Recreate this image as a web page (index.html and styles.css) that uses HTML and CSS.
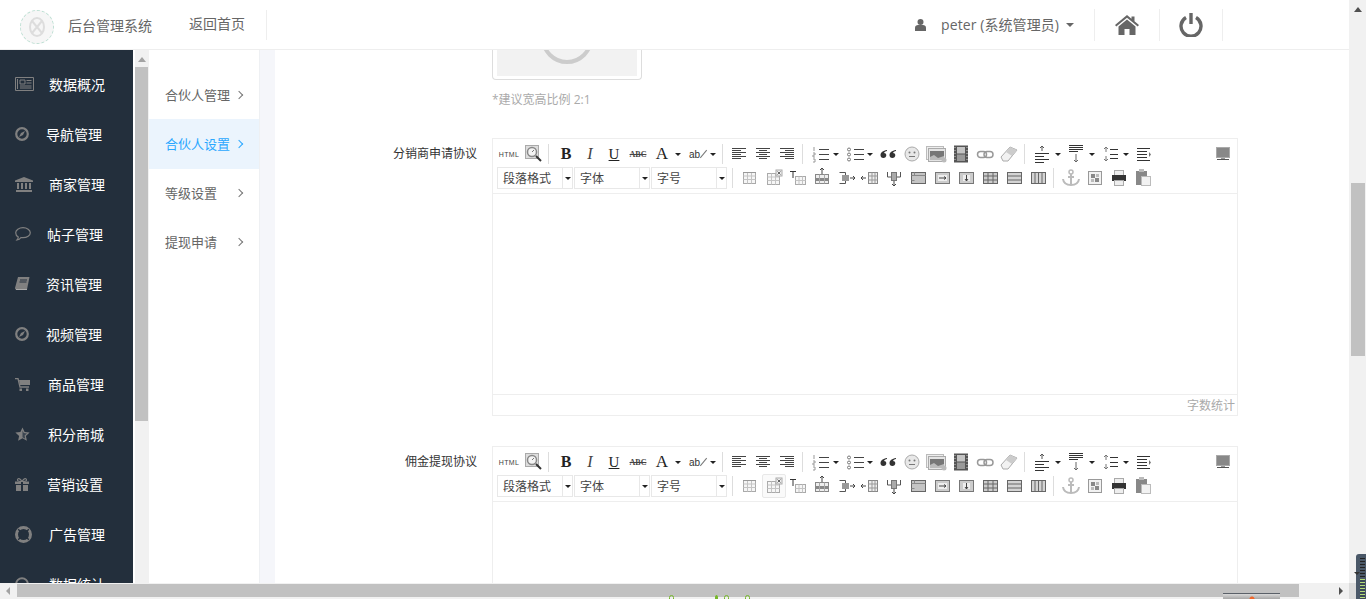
FILE: index.html
```html
<!DOCTYPE html>
<html lang="zh-CN">
<head>
<meta charset="utf-8">
<title>后台管理系统</title>
<link rel="stylesheet" href="styles.css">
</head>
<body>
<svg class="defs" width="0" height="0">
  <symbol id="i-search" viewBox="0 0 24 24"><rect x="4.500" y="3.500" width="13" height="13" fill="#ddd" stroke="#aaa"/><circle cx="11" cy="10" r="4.500" fill="#f4f4f4" stroke="#888" stroke-width="1.500"/><path d="M11 10l2-2" stroke="#777"/><path d="M15 14l5 5" stroke="#333" stroke-width="2"/></symbol>
  <symbol id="i-left" viewBox="0 0 24 24"><path d="M5 6.500h14M5 8.500h9M5 10.500h14M5 12.500h9M5 14.500h14M5 16.500h9" stroke="#444" fill="none"/></symbol>
  <symbol id="i-center" viewBox="0 0 24 24"><path d="M5 6.500h14M8 8.500h8M5 10.500h14M8 12.500h8M5 14.500h14M8 16.500h8" stroke="#444" fill="none"/></symbol>
  <symbol id="i-right" viewBox="0 0 24 24"><path d="M5 6.500h14M10 8.500h9M5 10.500h14M10 12.500h9M5 14.500h14M10 16.500h9" stroke="#444" fill="none"/></symbol>
  <symbol id="i-ol" viewBox="0 0 24 24"><path d="M11 7.500h10M11 12.500h10M11 17.500h10" stroke="#444" fill="none"/><path d="M6 5v4M5 11h2v2H5v2h2M5 17h2v3H5" stroke="#999" fill="none"/></symbol>
  <symbol id="i-ul" viewBox="0 0 24 24"><path d="M12 7.500h10M12 12.500h10M12 17.500h10" stroke="#444" fill="none"/><circle cx="7" cy="7.500" r="1.500" fill="none" stroke="#777"/><circle cx="7" cy="12.500" r="1.500" fill="none" stroke="#777"/><circle cx="7" cy="17.500" r="1.500" fill="none" stroke="#777"/></symbol>
  <symbol id="i-quote" viewBox="0 0 24 24"><path d="M11 8c-4 .5-6.500 2.500-6.500 5.300 0 1.500 1.100 2.700 2.800 2.700 1.800 0 3-1.200 3-2.800 0-1.400-1-2.300-2.200-2.300.2-.8 1.300-1.500 2.900-1.800zM20 8c-4 .5-6.500 2.500-6.500 5.300 0 1.500 1.100 2.700 2.800 2.700 1.800 0 3-1.200 3-2.800 0-1.400-1-2.300-2.200-2.300.2-.8 1.300-1.500 2.900-1.800z" fill="#333"/></symbol>
  <symbol id="i-smile" viewBox="0 0 24 24"><circle cx="12" cy="12" r="7" fill="#e8e8e8" stroke="#aaa"/><circle cx="9.500" cy="10.500" r="1" fill="#777"/><circle cx="14.500" cy="10.500" r="1" fill="#777"/><path d="M9 14.500h6" stroke="#777"/></symbol>
  <symbol id="i-image" viewBox="0 0 24 24"><rect x="2.500" y="4.500" width="17" height="13" fill="#eee" stroke="#bbb"/><rect x="4.500" y="6.500" width="17" height="13" fill="#e4e4e4" stroke="#aaa"/><rect x="6" y="9" width="14" height="9" fill="#777"/><path d="M6 15l4-2 4 3 6-2v4H6z" fill="#bbb"/><circle cx="20" cy="18" r="2.500" fill="#bbb"/></symbol>
  <symbol id="i-film" viewBox="0 0 24 24"><rect x="5" y="3.500" width="14" height="17" fill="#555"/><path d="M6 5v1M6 8v1M6 11v1M6 14v1M6 17v1M18 5v1M18 8v1M18 11v1M18 14v1M18 17v1" stroke="#ccc"/><rect x="8" y="5" width="8" height="6.500" fill="#c4c4c4"/><rect x="8" y="12.500" width="8" height="6.500" fill="#999"/></symbol>
  <symbol id="i-link" viewBox="0 0 24 24"><rect x="4.500" y="9.500" width="9" height="6" rx="3" fill="none" stroke="#999" stroke-width="1.500"/><rect x="11" y="9.500" width="9" height="6" rx="3" fill="none" stroke="#999" stroke-width="1.500"/></symbol>
  <symbol id="i-eraser" viewBox="0 0 24 24"><path d="M4 15l9-10 7 3-9 11-5 0z" fill="#f2f2f2" stroke="#aaa"/><path d="M13 5l7 3-5 6-6-4z" fill="#ccc"/></symbol>
  <symbol id="i-above" viewBox="0 0 24 24"><path d="M12 9V4M10 6l2-2 2 2" stroke="#555" fill="none"/><path d="M5 11.500h14M5 14.500h9M5 17.500h14M5 20.500h9" stroke="#333" fill="none"/></symbol>
  <symbol id="i-below" viewBox="0 0 24 24"><path d="M5 3.500h14M5 5.500h14M5 7.500h14M5 9.500h9" stroke="#333" fill="none"/><path d="M12 12v8M10 18l2 2 2-2" stroke="#666" fill="none"/></symbol>
  <symbol id="i-line" viewBox="0 0 24 24"><path d="M8 5v5M6 7l2-2 2 2M8 14v5M6 17l2 2 2-2" stroke="#777" fill="none"/><path d="M12 7.500h8M12 12.500h8M12 16.500h8" stroke="#333" fill="none"/></symbol>
  <symbol id="i-indent" viewBox="0 0 24 24"><path d="M5 6.500h13M5 9.500h10M5 12.500h10M5 15.500h10M5 18.500h13" stroke="#333" fill="none"/><path d="M17 10l2 2.500-2 2.500z" fill="#777"/></symbol>
  <symbol id="i-full" viewBox="0 0 24 24"><rect x="5.500" y="5.500" width="13" height="10" fill="#888" stroke="#aaa"/><path d="M6 17.500h12" stroke="#555"/><path d="M10 16.500h4" stroke="#999"/></symbol>
  <symbol id="i-table" viewBox="0 0 24 24"><rect x="5.500" y="6.500" width="12" height="11" fill="#f6f6f6" stroke="#aaa"/><path d="M5.500 10h12M5.500 13.500h12M9.500 6.500v11M13.500 6.500v11" stroke="#c4c4c4"/><path d="M5 6.500h13" stroke="#999"/></symbol>
  <symbol id="i-tdel" viewBox="0 0 24 24"><rect x="5.500" y="7.500" width="12" height="11" fill="#f6f6f6" stroke="#aaa"/><path d="M5.500 11h12M5.500 14.500h12M9.500 7.500v11M13.500 7.500v11" stroke="#c4c4c4"/><rect x="14" y="4" width="6" height="6" fill="#eee" stroke="#aaa"/><path d="M15.500 5.500l3 3M18.500 5.500l-3 3" stroke="#666"/></symbol>
  <symbol id="i-ttitle" viewBox="0 0 24 24"><path d="M4 5.500h6M7 5v7" stroke="#333" fill="none"/><rect x="9.500" y="10.500" width="10" height="8" fill="#f6f6f6" stroke="#aaa"/><path d="M9.500 14.500h10M13 10.500v8M16.500 10.500v8" stroke="#c4c4c4"/></symbol>
  <symbol id="i-rowadd" viewBox="0 0 24 24"><path d="M12 2v6M10 4l2-2 2 2" stroke="#444" fill="none"/><rect x="5.500" y="8.500" width="13" height="9" fill="#eee" stroke="#888"/><rect x="6" y="12" width="12" height="3" fill="#888"/><path d="M9.500 8.500v9M14.500 8.500v9" stroke="#aaa"/></symbol>
  <symbol id="i-coladd" viewBox="0 0 24 24"><path d="M5.500 6.500h6v11h-6" fill="none" stroke="#555"/><rect x="8" y="9" width="7" height="6" fill="#999"/><path d="M16 12h5M19 10l2 2-2 2" stroke="#444" fill="none"/></symbol>
  <symbol id="i-colins" viewBox="0 0 24 24"><rect x="10.500" y="6.500" width="9" height="11" fill="#eee" stroke="#888"/><path d="M14 6.500v11M17 6.500v11M10.500 10h9M10.500 14h9" stroke="#999"/><path d="M3 12h5M5 10l-2 2 2 2" stroke="#444" fill="none"/></symbol>
  <symbol id="i-merge" viewBox="0 0 24 24"><path d="M5.500 6v5h4M18.500 6v5h-4" fill="none" stroke="#555"/><rect x="9.500" y="6.500" width="5" height="8" fill="#aaa" stroke="#777"/><path d="M12 15v5M10 18l2 2 2-2" stroke="#444" fill="none"/></symbol>
  <symbol id="i-cellfull" viewBox="0 0 24 24"><rect x="5.500" y="6.500" width="14" height="11" fill="#c4c4c4" stroke="#666"/><path d="M5.500 9.500h14M5.500 14.500h3M8.500 6.500v3" stroke="#888"/></symbol>
  <symbol id="i-cellright" viewBox="0 0 24 24"><rect x="5.500" y="6.500" width="14" height="11" fill="#ccc" stroke="#777"/><rect x="8" y="9" width="9" height="6" fill="#eee"/><path d="M9 12h7M14 10.500l2 1.500-2 1.500" stroke="#444" fill="none"/></symbol>
  <symbol id="i-celldown" viewBox="0 0 24 24"><rect x="5.500" y="6.500" width="14" height="11" fill="#ccc" stroke="#777"/><rect x="9" y="9" width="7" height="6" fill="#eee"/><path d="M12.500 9v6M11 13l1.500 2 1.500-2" stroke="#444" fill="none"/></symbol>
  <symbol id="i-grid" viewBox="0 0 24 24"><rect x="5.500" y="6.500" width="14" height="11" fill="#ccc" stroke="#666"/><path d="M5.500 10h14M5.500 14h14M10 6.500v11M15 6.500v11" stroke="#666"/></symbol>
  <symbol id="i-rows" viewBox="0 0 24 24"><rect x="5.500" y="6.500" width="14" height="11" fill="#d4d4d4" stroke="#666"/><path d="M5.500 10h14M5.500 14h14" stroke="#666"/></symbol>
  <symbol id="i-cols" viewBox="0 0 24 24"><rect x="5.500" y="6.500" width="14" height="11" fill="#d4d4d4" stroke="#666"/><path d="M9 6.500v11M12.500 6.500v11M16 6.500v11" stroke="#666"/></symbol>
  <symbol id="i-anchor" viewBox="0 0 24 24"><circle cx="12" cy="6" r="2" fill="none" stroke="#bbb" stroke-width="1.500"/><path d="M12 8v11M9 11h6M4 13c.5 4 4 6 8 6s7.500-2 8-6" fill="none" stroke="#bbb" stroke-width="2"/></symbol>
  <symbol id="i-page" viewBox="0 0 24 24"><rect x="5.500" y="5.500" width="13" height="13" fill="#f2f2f2" stroke="#999"/><rect x="8" y="8" width="4" height="4" fill="#888"/><rect x="13" y="8" width="3" height="3" fill="#bbb"/><rect x="8" y="13" width="3" height="3" fill="#bbb"/><rect x="12" y="12" width="4" height="4" fill="#888"/></symbol>
  <symbol id="i-print" viewBox="0 0 24 24"><rect x="7.500" y="4.500" width="9" height="5" fill="#eee" stroke="#aaa"/><rect x="5" y="9" width="14" height="6" fill="#333"/><rect x="7.500" y="14.500" width="9" height="5" fill="#eee" stroke="#aaa"/></symbol>
  <symbol id="i-paste" viewBox="0 0 24 24"><rect x="5" y="5" width="11" height="14" fill="#888"/><rect x="8" y="3" width="5" height="3" fill="#bbb"/><rect x="10.500" y="10.500" width="9" height="9" fill="#f2f2f2" stroke="#bbb"/></symbol>
</svg>

<div class="app">
  <div class="screen">
    <div class="main">
      <header class="top">
        <div class="logo"><svg width="20" height="24" viewBox="0 0 20 24"><ellipse cx="10" cy="12" rx="7" ry="9" fill="none" stroke="#ddd" stroke-width="2"/><path d="M5 6l10 12M15 6L5 18" stroke="#ddd" stroke-width="2"/></svg></div>
        <span class="brand">后台管理系统</span>
        <a class="back">返回首页</a>
        <div class="top-right">
          <div class="user">
            <svg class="user-icon" width="11" height="12" viewBox="0 0 11 12"><circle cx="5.500" cy="3" r="3" fill="#666"/><path d="M0 12V8.500C0 7 1.500 6 3 6h5c1.500 0 3 1 3 2.500V12z" fill="#666"/></svg>
            <span class="user-name">peter (系统管理员)</span>
            <i class="caret"></i>
          </div>
          <div class="top-btn"><svg width="24" height="20" viewBox="0 0 24 20"><path d="M12 0l4.500 3.800V1.500h3v4.800L24 10l-1.300 1.500L12 2.700 1.300 11.500 0 10z" fill="#666"/><path d="M3.500 11.500L12 4.500l8.500 7V20h-6v-6h-5v6h-6z" fill="#666"/></svg></div>
          <div class="top-btn"><svg width="24" height="24" viewBox="0 0 24 24"><path d="M7 4.500a10 10 0 1 0 10 0" fill="none" stroke="#666" stroke-width="3.400"/><path d="M12 0v11" stroke="#666" stroke-width="3.400"/></svg></div>
        </div>
      </header>
      <div class="body">
        <nav class="side">
          <a class="side-item"><svg class="w-news" width="19" height="14" viewBox="0 0 19 14"><path d="M.5.500h18v13H.5z" fill="none" stroke="#808080"/><path d="M2.500 2v10M5 3h5v4H5zM11.500 3.500h5M11.500 6h5M5 9h11.500M5 11h11.500" stroke="#808080" fill="none"/></svg><span>数据概况</span></a>
          <a class="side-item"><svg class="w-compass" width="14" height="14" viewBox="0 0 14 14"><circle cx="7" cy="7" r="5.800" fill="none" stroke="#808080" stroke-width="2.200"/><path d="M10 4L8 8 4 10l2-4z" fill="#808080"/></svg><span>导航管理</span></a>
          <a class="side-item"><svg class="w-bank" width="18" height="15" viewBox="0 0 18 15"><path d="M9 0l9 3.500V5H0V3.500z" fill="#808080"/><path d="M2 6h2v6H2zM6 6h2v6H6zM10 6h2v6h-2zM14 6h2v6h-2zM1 13h16v2H1z" fill="#808080"/></svg><span>商家管理</span></a>
          <a class="side-item"><svg class="w-comment" width="16" height="14" viewBox="0 0 16 14"><path d="M8 .7c4 0 7.300 2.200 7.300 5s-3.300 5-7.300 5c-.7 0-1.300 0-2-.2C5 12 3.500 12.800 2 13c.7-.8 1.200-1.700 1.300-3C1.500 9 .7 7.500.7 5.700c0-2.800 3.300-5 7.300-5z" fill="none" stroke="#808080" stroke-width="1.200"/></svg><span>帖子管理</span></a>
          <a class="side-item"><svg class="w-book" width="15" height="14" viewBox="0 0 15 14"><path d="M3 0h11.500L12 12.500H1.500C.5 12.500 0 12 0 11z" fill="#808080"/><path d="M5 3h7M4.500 5h7" stroke="#232f3c"/><path d="M1 12.500h11" stroke="#aaa"/></svg><span>资讯管理</span></a>
          <a class="side-item"><svg class="w-compass" width="14" height="14" viewBox="0 0 14 14"><circle cx="7" cy="7" r="5.800" fill="none" stroke="#808080" stroke-width="2.200"/><path d="M10 4L8 8 4 10l2-4z" fill="#808080"/></svg><span>视频管理</span></a>
          <a class="side-item"><svg class="w-cart" width="15" height="13" viewBox="0 0 15 13"><path d="M0 .5h3L5 9h9" fill="none" stroke="#808080" stroke-width="1.300"/><path d="M4 2h11v5H5zM4.500 10.500h2.500V13H4.500zM11 10.500h2.500V13H11z" fill="#808080"/></svg><span>商品管理</span></a>
          <a class="side-item"><svg class="w-cart" width="15" height="14" viewBox="0 0 15 14"><path d="M7.500.5l2.100 4.600 5 .5-3.700 3.300 1 4.900-4.400-2.500-4.400 2.500 1-4.900L.4 5.600l5-.5z" fill="#808080"/><path d="M7.500 3.500v6.700l2.700 1.500-.6-3.200 2.400-2.100-3.200-.4z" fill="#3b4550"/></svg><span>积分商城</span></a>
          <a class="side-item"><svg class="w-gift" width="14" height="13" viewBox="0 0 14 13"><path d="M0 3.500h14V6H0zM1 7h12v6H1z" fill="#808080"/><path d="M6 3h2v10H6z" fill="#232f3c"/><path d="M7 3.500C5 0 2.500 0 2.500 2c0 1 2 1.500 4.500 1.500zM7 3.500C9 0 11.500 0 11.500 2c0 1-2 1.500-4.500 1.500z" fill="none" stroke="#808080" stroke-width="1.200"/></svg><span>营销设置</span></a>
          <a class="side-item"><svg class="w-ring" width="17" height="17" viewBox="0 0 17 17"><circle cx="8.500" cy="8.500" r="7" fill="none" stroke="#808080" stroke-width="3"/><path d="M3.200 3.200l3 3M13.800 3.200l-3 3M3.200 13.800l3-3M13.800 13.800l-3-3" stroke="#232f3c" stroke-width="1.300"/></svg><span>广告管理</span></a>
          <a class="side-item"><svg class="w-last" width="14" height="14" viewBox="0 0 14 14"><circle cx="7" cy="7" r="5.800" fill="none" stroke="#808080" stroke-width="2"/></svg><span>数据统计</span></a>
        </nav>
        <div class="side-scroll"><i class="arrow-up"></i><div class="side-thumb"></div></div>
        <div class="subnav">
          <a class="sub-item"><span>合伙人管理</span><i class="chev"></i></a>
          <a class="sub-item active"><span>合伙人设置</span><i class="chev"></i></a>
          <a class="sub-item"><span>等级设置</span><i class="chev"></i></a>
          <a class="sub-item"><span>提现申请</span><i class="chev"></i></a>
        </div>
        <div class="gutter"></div>
        <main class="content">
          <div class="upload-row">
            <div class="upload-box"><svg width="140" height="26" viewBox="0 0 140 26"><circle cx="70" cy="-12" r="24" fill="none" stroke="#ccc" stroke-width="4"/></svg></div>
            <p class="hint">*建议宽高比例 2:1</p>
          </div>

          <div class="form-row">
            <label class="form-label">分销商申请协议</label>
            <div class="editor">
              <div class="toolbar">
                <div class="tb-row">
                  <span class="btn t-html">HTML</span><span class="btn"><svg><use href="#i-search"/></svg></span><i class="sep"></i>
                  <span class="btn t-b">B</span><span class="btn t-i">I</span><span class="btn t-u">U</span><span class="btn t-abc">ABC</span>
                  <span class="btn t-a">A</span><i class="drop wide"></i><span class="btn t-ab">ab</span><i class="drop wide"></i><i class="sep tight"></i>
                  <span class="btn"><svg><use href="#i-left"/></svg></span><span class="btn"><svg><use href="#i-center"/></svg></span><span class="btn"><svg><use href="#i-right"/></svg></span><i class="sep"></i>
                  <span class="btn"><svg><use href="#i-ol"/></svg></span><i class="drop"></i><span class="btn"><svg><use href="#i-ul"/></svg></span><i class="drop"></i>
                  <span class="btn"><svg><use href="#i-quote"/></svg></span><span class="btn"><svg><use href="#i-smile"/></svg></span><span class="btn"><svg><use href="#i-image"/></svg></span><span class="btn shift"><svg><use href="#i-film"/></svg></span><span class="btn"><svg><use href="#i-link"/></svg></span><span class="btn"><svg><use href="#i-eraser"/></svg></span><i class="sep"></i>
                  <span class="btn"><svg><use href="#i-above"/></svg></span><i class="drop"></i><span class="btn"><svg><use href="#i-below"/></svg></span><i class="drop"></i><span class="btn"><svg><use href="#i-line"/></svg></span><i class="drop"></i><span class="btn"><svg><use href="#i-indent"/></svg></span>
                  <span class="btn push"><svg><use href="#i-full"/></svg></span>
                </div>
                <div class="tb-row">
                  <div class="combo"><span class="combo-label">段落格式</span><i class="combo-arrow"></i></div>
                  <div class="combo"><span class="combo-label">字体</span><i class="combo-arrow"></i></div>
                  <div class="combo"><span class="combo-label">字号</span><i class="combo-arrow"></i></div>
                  <i class="sep after-combo"></i>
                  <span class="btn"><svg><use href="#i-table"/></svg></span><span class="btn"><svg><use href="#i-tdel"/></svg></span><span class="btn"><svg><use href="#i-ttitle"/></svg></span><span class="btn"><svg><use href="#i-rowadd"/></svg></span><span class="btn"><svg><use href="#i-coladd"/></svg></span><span class="btn"><svg><use href="#i-colins"/></svg></span><span class="btn"><svg><use href="#i-merge"/></svg></span><span class="btn"><svg><use href="#i-cellfull"/></svg></span><span class="btn"><svg><use href="#i-cellright"/></svg></span><span class="btn"><svg><use href="#i-celldown"/></svg></span><span class="btn"><svg><use href="#i-grid"/></svg></span><span class="btn"><svg><use href="#i-rows"/></svg></span><span class="btn"><svg><use href="#i-cols"/></svg></span><i class="sep"></i>
                  <span class="btn"><svg><use href="#i-anchor"/></svg></span><span class="btn"><svg><use href="#i-page"/></svg></span><span class="btn"><svg><use href="#i-print"/></svg></span><span class="btn"><svg><use href="#i-paste"/></svg></span>
                </div>
              </div>
              <div class="ed-body"></div>
              <div class="ed-foot">字数统计</div>
            </div>
          </div>

          <div class="form-row">
            <label class="form-label">佣金提现协议</label>
            <div class="editor">
              <div class="toolbar">
                <div class="tb-row">
                  <span class="btn t-html">HTML</span><span class="btn"><svg><use href="#i-search"/></svg></span><i class="sep"></i>
                  <span class="btn t-b">B</span><span class="btn t-i">I</span><span class="btn t-u">U</span><span class="btn t-abc">ABC</span>
                  <span class="btn t-a">A</span><i class="drop wide"></i><span class="btn t-ab">ab</span><i class="drop wide"></i><i class="sep tight"></i>
                  <span class="btn"><svg><use href="#i-left"/></svg></span><span class="btn"><svg><use href="#i-center"/></svg></span><span class="btn"><svg><use href="#i-right"/></svg></span><i class="sep"></i>
                  <span class="btn"><svg><use href="#i-ol"/></svg></span><i class="drop"></i><span class="btn"><svg><use href="#i-ul"/></svg></span><i class="drop"></i>
                  <span class="btn"><svg><use href="#i-quote"/></svg></span><span class="btn"><svg><use href="#i-smile"/></svg></span><span class="btn"><svg><use href="#i-image"/></svg></span><span class="btn shift"><svg><use href="#i-film"/></svg></span><span class="btn"><svg><use href="#i-link"/></svg></span><span class="btn"><svg><use href="#i-eraser"/></svg></span><i class="sep"></i>
                  <span class="btn"><svg><use href="#i-above"/></svg></span><i class="drop"></i><span class="btn"><svg><use href="#i-below"/></svg></span><i class="drop"></i><span class="btn"><svg><use href="#i-line"/></svg></span><i class="drop"></i><span class="btn"><svg><use href="#i-indent"/></svg></span>
                  <span class="btn push"><svg><use href="#i-full"/></svg></span>
                </div>
                <div class="tb-row">
                  <div class="combo"><span class="combo-label">段落格式</span><i class="combo-arrow"></i></div>
                  <div class="combo"><span class="combo-label">字体</span><i class="combo-arrow"></i></div>
                  <div class="combo"><span class="combo-label">字号</span><i class="combo-arrow"></i></div>
                  <i class="sep after-combo"></i>
                  <span class="btn"><svg><use href="#i-table"/></svg></span><span class="btn hovered"><svg><use href="#i-tdel"/></svg></span><span class="btn"><svg><use href="#i-ttitle"/></svg></span><span class="btn"><svg><use href="#i-rowadd"/></svg></span><span class="btn"><svg><use href="#i-coladd"/></svg></span><span class="btn"><svg><use href="#i-colins"/></svg></span><span class="btn"><svg><use href="#i-merge"/></svg></span><span class="btn"><svg><use href="#i-cellfull"/></svg></span><span class="btn"><svg><use href="#i-cellright"/></svg></span><span class="btn"><svg><use href="#i-celldown"/></svg></span><span class="btn"><svg><use href="#i-grid"/></svg></span><span class="btn"><svg><use href="#i-rows"/></svg></span><span class="btn"><svg><use href="#i-cols"/></svg></span><i class="sep"></i>
                  <span class="btn"><svg><use href="#i-anchor"/></svg></span><span class="btn"><svg><use href="#i-page"/></svg></span><span class="btn"><svg><use href="#i-print"/></svg></span><span class="btn"><svg><use href="#i-paste"/></svg></span>
                </div>
              </div>
              <div class="ed-body"></div>
            </div>
          </div>
        </main>
      </div>
    </div>
    <div class="page-scroll"><i class="arrow-up"></i><div class="page-thumb"></div></div>
  </div>
  <div class="hscroll">
    <i class="arrow-left"></i>
    <div class="h-thumb"></div>
    <i class="arrow-right"></i>
    <div class="corner"></div>
  </div>
  <div class="overlay-plant"><i></i><i class="mid"></i><i></i><i></i></div>
  <div class="overlay-box"></div>
  <div class="overlay-meter"></div>
</div>
</body>
</html>
```
FILE: styles.css
```css
* { box-sizing: border-box; }
html, body { margin: 0; padding: 0; height: 599px; overflow: hidden; background: #fff; }
body { font-family: "Open Sans", "Noto Sans CJK SC", sans-serif; font-size: 12px; color: #666; }
.defs { position: absolute; }
a { color: inherit; text-decoration: none; }
i { font-style: normal; display: block; }

.app { position: relative; width: 1366px; height: 599px; display: flex; flex-direction: column; overflow: hidden; }
.screen { display: flex; height: 583px; flex: none; }
.main { flex: 1; min-width: 0; display: flex; flex-direction: column; }

/* Top bar */
.top { height: 50px; flex: none; display: flex; align-items: center; padding-left: 20px; border-bottom: 1px solid #eeeeee; background: #fff; }
.logo { width: 34px; height: 34px; margin-top: 4px; border: 1px dashed #bfe0d4; border-radius: 50%; background: #f6f6f6; display: flex; align-items: center; justify-content: center; }
.brand { margin-left: 14px; font-size: 14px; line-height: 20px; color: #666; padding-top: 2px; }
.back { margin-left: 37px; font-size: 14px; line-height: 20px; color: #666; height: 30px; padding: 4px 21px 0 0; border-right: 1px solid #eee; }
.top-right { margin-left: auto; display: flex; align-items: center; height: 32px; padding-right: 126px; }
.user { display: flex; align-items: center; height: 32px; padding-right: 20px; border-right: 1px solid #eee; }
.user-icon { margin-right: 15px; }
.user-name { font-size: 14px; color: #666; line-height: 20px; white-space: nowrap; letter-spacing: .08px; }
.caret { margin-left: 7px; width: 0; height: 0; border-left: 4px solid transparent; border-right: 4px solid transparent; border-top: 4px solid #666; }
.top-btn { width: 65px; height: 32px; display: flex; align-items: center; justify-content: center; border-right: 1px solid #eee; }
.top-btn:last-child { width: 63px; }

/* Body row */
.body { flex: 1; min-height: 0; display: flex; overflow: hidden; }
.side { width: 133px; flex: none; background: #232f3c; padding-top: 9px; overflow: hidden; }
.side-item { display: flex; align-items: center; height: 50px; padding-left: 15px; color: #fff; font-size: 14px; white-space: nowrap; }
.w-news { margin-right: 15px; }
.w-compass { margin-right: 17px; }
.w-bank { margin-right: 16px; }
.w-comment { margin-right: 16px; }
.w-book { margin-right: 16px; }
.w-cart { margin-right: 18px; }
.w-gift { margin-right: 18px; }
.w-ring { margin-right: 17px; }
.w-last { margin-right: 20px; }
.side-scroll { width: 16px; flex: none; background: #f1f1f1; border-left: 2px solid #fff; padding-top: 7px; }
.side-thumb { margin: 5px 1px 0 0; height: 354px; background: #c1c1c1; }
.arrow-up { width: 0; height: 0; margin: 0 auto; border-left: 4px solid transparent; border-right: 4px solid transparent; border-bottom: 5px solid #a3a3a3; }
.subnav { width: 111px; flex: none; padding-top: 20px; background: #fff; border-right: 1px solid #eef0f3; }
.sub-item { display: flex; align-items: center; justify-content: space-between; height: 49px; padding: 0 15px 0 16px; font-size: 13px; color: #666; }
.sub-item.active { height: 50px; margin-bottom: -1px; padding-bottom: 1px; background: #ebf4fd; color: #2aa7ff; }
.chev { width: 6px; height: 6px; margin-right: 2px; border-top: 1px solid #777; border-right: 1px solid #777; transform: rotate(45deg); }
.active .chev { border-color: #2aa7ff; }
.gutter { width: 15px; flex: none; background: #f5f6fa; }
.content { flex: 1; min-width: 0; overflow: hidden; background: #fff; }

/* Upload */
.upload-row { margin-left: 217px; }
.upload-box { width: 150px; height: 30px; border: 1px solid #ddd; border-top: 0; border-radius: 0 0 4px 4px; padding: 0 4px 3px; }
.upload-box svg { display: block; background: #f2f2f2; }
.hint { margin: 10px 0 0; font-size: 12px; line-height: 20px; color: #aaa; }

/* Form rows */
.form-row { display: flex; margin-top: 28px; }
.form-row + .form-row { margin-top: 30px; }
.form-label { width: 217px; flex: none; padding: 6px 15px 0 0; text-align: right; font-size: 12px; line-height: 20px; color: #333; }
.editor { width: 746px; flex: none; height: 278px; border: 1px solid #eeeeee; background: #fff; display: flex; flex-direction: column; }
.toolbar { height: 55px; flex: none; padding: 3px 2px 0 4px; border-bottom: 1px solid #eeeeee; }
.tb-row { display: flex; align-items: center; height: 24px; }
.btn { width: 24px; height: 24px; flex: none; display: flex; align-items: center; justify-content: center; color: #222; font-family: "Liberation Serif", serif; position: relative; }
.btn svg { width: 24px; height: 24px; display: block; }
.shift { margin-left: 1px; }
.push { margin-left: auto; }
.hovered { border: 1px solid #e8e8e8; border-radius: 2px; background: #fafafa; }
.hovered svg { flex: none; }
.t-html { font-family: "Liberation Sans", sans-serif; font-size: 7px; color: #444; letter-spacing: .3px; }
.t-b { font-size: 16px; font-weight: 700; }
.t-i { font-size: 16px; font-style: italic; color: #444; }
.t-u { font-size: 15px; text-decoration: underline; }
.t-abc { font-size: 8px; font-weight: 700; text-decoration: line-through; color: #444; }
.t-a { font-size: 17px; }
.t-ab { font-family: "Liberation Sans", sans-serif; font-size: 10px; color: #333; justify-content: flex-start; padding-left: 4px; }
.t-ab::after { content: ""; width: 1px; height: 10px; margin-left: 3px; background: #777; transform: rotate(40deg); }
.sep { width: 9px; height: 20px; flex: none; position: relative; }
.sep::before { content: ""; position: absolute; left: 3px; top: 0; bottom: 0; width: 1px; background: #ddd; }
.sep.tight { width: 7px; }
.sep.tight::before { left: 2px; }
.sep.after-combo { width: 10px; }
.sep.after-combo::before { left: 4px; }
.drop { width: 10px; height: 24px; flex: none; position: relative; }
.drop.wide { width: 11px; }
.drop::before { content: ""; position: absolute; left: 1px; top: 11px; border-left: 3px solid transparent; border-right: 3px solid transparent; border-top: 3px solid #222; }
.combo { width: 76px; height: 22px; flex: none; display: flex; margin-right: 1px; }
.combo-label { width: 66px; height: 22px; border: 1px solid #e8e8e8; padding-left: 5px; font-size: 12px; line-height: 20px; color: #444; font-family: "Noto Sans CJK SC", sans-serif; }
.combo-arrow { width: 10px; height: 22px; border: 1px solid #e8e8e8; border-left: 0; position: relative; }
.combo-arrow::before { content: ""; position: absolute; left: 2px; top: 9px; border-left: 3px solid transparent; border-right: 3px solid transparent; border-top: 3px solid #222; }
.ed-body { flex: 1; min-height: 0; }
.ed-foot { height: 21px; flex: none; border-top: 1px solid #eeeeee; text-align: right; padding-right: 2px; font-size: 12px; line-height: 20px; color: #aaa; font-family: "Noto Sans CJK SC", sans-serif; }

/* Page scrollbars */
.page-scroll { width: 17px; flex: none; background: #f1f1f1; padding-top: 7px; }
.page-thumb { margin: 171px 1px 0 2px; height: 173px; background: #c1c1c1; }
.page-scroll .arrow-up { border-bottom-color: #505050; }
.hscroll { height: 16px; flex: none; display: flex; align-items: flex-start; background: #f1f1f1; position: relative; }
.arrow-left { width: 0; height: 0; margin: 4px 0 0 6px; border-top: 4px solid transparent; border-bottom: 4px solid transparent; border-right: 4px solid #a3a3a3; }
.h-thumb { margin: 1px 0 0 7px; width: 1282px; height: 13px; background: #c1c1c1; }
.arrow-right { width: 0; height: 0; margin: 4px 0 0 40px; border-top: 4px solid transparent; border-bottom: 4px solid transparent; border-left: 4px solid #505050; }
.corner { position: absolute; right: 0; top: 0; width: 17px; height: 16px; background: #dcdcdc; }

/* Desktop items showing through at the bottom edge */
.overlay-plant { position: absolute; left: 669px; top: 595px; height: 4px; display: flex; }
.overlay-plant i { width: 5px; height: 5px; margin-right: 16px; border: 1px solid #76b82a; border-radius: 50% 50% 0 0; }
.overlay-plant i:first-child { margin-right: 41px; }
.overlay-plant .mid { width: 3px; margin-right: 6px; background: #76b82a; }
.overlay-box { position: absolute; left: 1223px; top: 593px; width: 57px; height: 6px; background: radial-gradient(circle at 29px 6px, #f0662a 0 2px, transparent 3px), linear-gradient(#5a6068 0 1px, #d8d8d8 1px, #a8a8a8); }
.overlay-meter { position: absolute; left: 1356px; top: 554px; width: 10px; height: 45px; border-radius: 3px 0 0 0; background: repeating-linear-gradient(#b5dc7a 0 1px, #3c4a58 1px 3px) 4px 25px / 5px 20px no-repeat, repeating-linear-gradient(#222 0 1px, #4a5868 1px 3px) 4px 4px / 5px 21px no-repeat, #4a5868; }
.overlay-meter::before { content: ""; position: absolute; left: -2px; top: 18px; border-left: 3px solid transparent; border-right: 3px solid transparent; border-top: 3px solid #333; }
```
